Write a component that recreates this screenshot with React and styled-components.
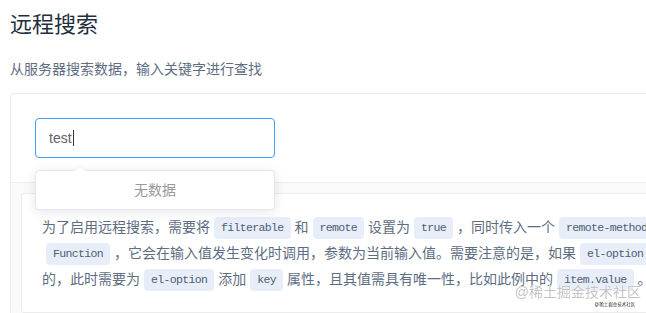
import styled, { createGlobalStyle } from 'styled-components';

const GlobalStyle = createGlobalStyle`
  html, body {
    margin: 0;
    padding: 0;
    background: #fff;
    overflow: hidden;
  }
  body {
    padding-left: 10px;
    font-family: "Liberation Sans", "Noto Sans CJK SC", sans-serif;
  }
`;

const Page = styled.div`
  width: 780px;
`;

const Title = styled.h2`
  margin: 0;
  padding-top: 8px;
  font-size: 22px;
  font-weight: 400;
  line-height: 33px;
  color: #1f2f3d;
`;

const Lead = styled.p`
  margin: 17px 0 13px;
  font-size: 14px;
  line-height: 22px;
  color: #5e6d82;
`;

const DemoBlock = styled.div`
  border: 1px solid #ebebeb;
  border-radius: 3px;
`;

const Source = styled.div`
  padding: 24px;
`;

const SelectWrap = styled.div`
  position: relative;
  width: 240px;
`;

const FakeInput = styled.div`
  box-sizing: border-box;
  height: 40px;
  display: flex;
  align-items: center;
  padding: 0 13px;
  border: 1px solid #409eff;
  border-radius: 4px;
  font-size: 14px;
  color: #606266;
`;

const Caret = styled.span`
  width: 1px;
  height: 16px;
  margin-left: 1px;
  background: #303133;
`;

const Dropdown = styled.div`
  position: absolute;
  top: 52px;
  left: 0;
  width: 100%;
  box-sizing: border-box;
  background: #fff;
  border: 1px solid #e4e7ed;
  border-radius: 4px;
  box-shadow: 0 2px 12px 0 rgba(0, 0, 0, 0.1);
  z-index: 2;

  &::before {
    content: '';
    position: absolute;
    top: -6px;
    left: 38px;
    width: 0;
    height: 0;
    border-left: 6px solid transparent;
    border-right: 6px solid transparent;
    border-bottom: 6px solid #ebeef5;
  }
  &::after {
    content: '';
    position: absolute;
    top: -5px;
    left: 39px;
    width: 0;
    height: 0;
    border-left: 5px solid transparent;
    border-right: 5px solid transparent;
    border-bottom: 5px solid #fff;
  }
`;

const Empty = styled.p`
  margin: 0;
  padding: 10px 0;
  text-align: center;
  font-size: 14px;
  line-height: 18px;
  color: #999;
`;

const Meta = styled.div`
  border-top: 1px solid #eaeefb;
  background: #fafafa;
  padding: 10px;
`;

const Description = styled.div`
  border: 1px solid #ebebeb;
  border-radius: 3px;
  background: #fff;
  padding: 20px;
  font-size: 14px;
  line-height: 26px;
  color: #5e6d82;
`;

const Line = styled.div`
  white-space: nowrap;
`;

const Code = styled.code`
  display: inline-block;
  height: 22px;
  line-height: 22px;
  vertical-align: middle;
  margin: 0 4px;
  padding: 0 7px;
  border-radius: 4px;
  background: #e8eef9;
  color: #4e5d72;
  font-family: "Liberation Mono", monospace;
  font-size: 11.5px;
  letter-spacing: -0.65px;
`;

const Watermark = styled.div`
  position: fixed;
  right: 5px;
  bottom: 6px;
  display: flex;
  flex-direction: column;
  align-items: flex-end;
  pointer-events: none;
`;

const MarkText = styled.span`
  font-size: 14px;
  line-height: 17px;
  color: #c4c4c4;
  text-shadow: 0 0 1px #fff, 0 0 1px #fff;
`;

const MarkSmall = styled.span`
  font-size: 9px;
  line-height: 6px;
  margin-right: 6px;
  color: #333;
  transform: scale(0.5);
  transform-origin: right center;
`;

const lines = [
  [
    '为了启用远程搜索，需要将',
    { c: 'filterable' },
    '和',
    { c: 'remote' },
    '设置为',
    { c: 'true' },
    '，同时传入一个',
    { c: 'remote-method' },
    '。',
    { c: 'remote-method' },
    '为一个',
  ],
  [
    { c: 'Function' },
    '，它会在输入值发生变化时调用，参数为当前输入值。需要注意的是，如果',
    { c: 'el-option' },
    '是通过',
    { c: 'v-for' },
    '指令渲染出来',
  ],
  [
    '的，此时需要为',
    { c: 'el-option' },
    '添加',
    { c: 'key' },
    '属性，且其值需具有唯一性，比如此例中的',
    { c: 'item.value' },
    '。',
  ],
];

const App = () => (
  <>
    <GlobalStyle />
    <Page>
      <Title>远程搜索</Title>
      <Lead>从服务器搜索数据，输入关键字进行查找</Lead>
      <DemoBlock>
        <Source>
          <SelectWrap>
            <FakeInput>
              test
              <Caret />
            </FakeInput>
            <Dropdown>
              <Empty>无数据</Empty>
            </Dropdown>
          </SelectWrap>
        </Source>
        <Meta>
          <Description>
            {lines.map((parts, i) => (
              <Line key={i}>
                {parts.map((p, j) =>
                  typeof p === 'string' ? p : <Code key={j}>{p.c}</Code>,
                )}
              </Line>
            ))}
          </Description>
        </Meta>
      </DemoBlock>
    </Page>
    <Watermark>
      <MarkText>@稀土掘金技术社区</MarkText>
      <MarkSmall>@稀土掘金技术社区</MarkSmall>
    </Watermark>
  </>
);

export default App;
